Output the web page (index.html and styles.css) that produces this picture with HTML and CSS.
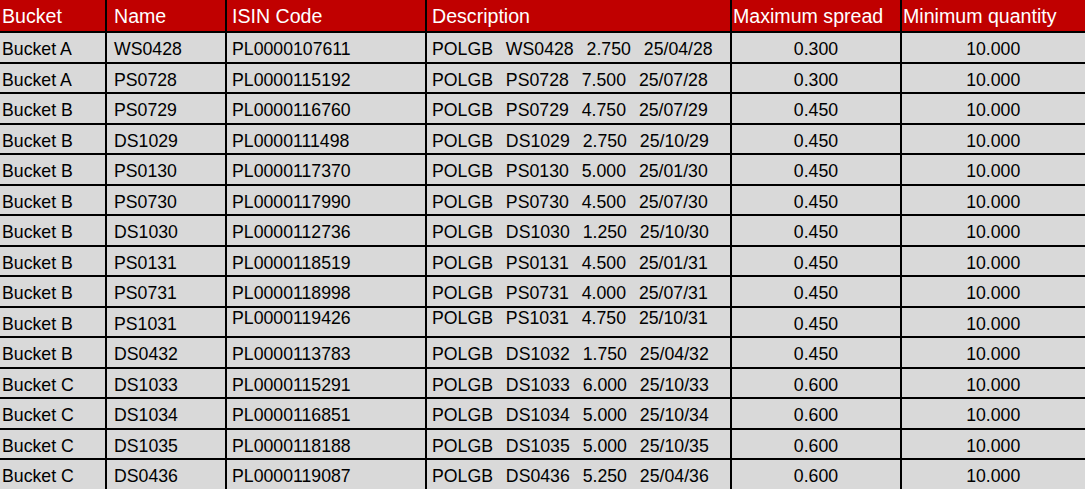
FILE: index.html
```html
<!DOCTYPE html>
<html>
<head>
<meta charset="utf-8">
<link rel="stylesheet" href="styles.css">
</head>
<body>
<table class="grid">
<colgroup>
<col class="c1"><col class="c2"><col class="c3"><col class="c4"><col class="c5"><col class="c6">
</colgroup>
<thead>
<tr class="head">
<th class="p1">Bucket</th><th class="p2">Name</th><th class="p3">ISIN Code</th><th class="p4 hd">Description</th><th class="p5">Maximum spread</th><th class="p6">Minimum quantity</th>
</tr>
</thead>
<tbody>
<tr><td class="p1">Bucket A</td><td class="p2">WS0428</td><td class="p3">PL0000107611</td><td class="p4">POLGB WS0428 2.750 25/04/28</td><td class="num">0.300</td><td class="num">10.000</td></tr>
<tr><td class="p1">Bucket A</td><td class="p2">PS0728</td><td class="p3">PL0000115192</td><td class="p4">POLGB PS0728 7.500 25/07/28</td><td class="num">0.300</td><td class="num">10.000</td></tr>
<tr><td class="p1">Bucket B</td><td class="p2">PS0729</td><td class="p3">PL0000116760</td><td class="p4">POLGB PS0729 4.750 25/07/29</td><td class="num">0.450</td><td class="num">10.000</td></tr>
<tr><td class="p1">Bucket B</td><td class="p2">DS1029</td><td class="p3">PL0000111498</td><td class="p4">POLGB DS1029 2.750 25/10/29</td><td class="num">0.450</td><td class="num">10.000</td></tr>
<tr><td class="p1">Bucket B</td><td class="p2">PS0130</td><td class="p3">PL0000117370</td><td class="p4">POLGB PS0130 5.000 25/01/30</td><td class="num">0.450</td><td class="num">10.000</td></tr>
<tr><td class="p1">Bucket B</td><td class="p2">PS0730</td><td class="p3">PL0000117990</td><td class="p4">POLGB PS0730 4.500 25/07/30</td><td class="num">0.450</td><td class="num">10.000</td></tr>
<tr><td class="p1">Bucket B</td><td class="p2">DS1030</td><td class="p3">PL0000112736</td><td class="p4">POLGB DS1030 1.250 25/10/30</td><td class="num">0.450</td><td class="num">10.000</td></tr>
<tr><td class="p1">Bucket B</td><td class="p2">PS0131</td><td class="p3">PL0000118519</td><td class="p4">POLGB PS0131 4.500 25/01/31</td><td class="num">0.450</td><td class="num">10.000</td></tr>
<tr><td class="p1">Bucket B</td><td class="p2">PS0731</td><td class="p3">PL0000118998</td><td class="p4">POLGB PS0731 4.000 25/07/31</td><td class="num">0.450</td><td class="num">10.000</td></tr>
<tr><td class="p1">Bucket B</td><td class="p2">PS1031</td><td class="p3 up">PL0000119426</td><td class="p4 up">POLGB PS1031 4.750 25/10/31</td><td class="num">0.450</td><td class="num">10.000</td></tr>
<tr><td class="p1">Bucket B</td><td class="p2">DS0432</td><td class="p3">PL0000113783</td><td class="p4">POLGB DS1032 1.750 25/04/32</td><td class="num">0.450</td><td class="num">10.000</td></tr>
<tr><td class="p1">Bucket C</td><td class="p2">DS1033</td><td class="p3">PL0000115291</td><td class="p4">POLGB DS1033 6.000 25/10/33</td><td class="num">0.600</td><td class="num">10.000</td></tr>
<tr><td class="p1">Bucket C</td><td class="p2">DS1034</td><td class="p3">PL0000116851</td><td class="p4">POLGB DS1034 5.000 25/10/34</td><td class="num">0.600</td><td class="num">10.000</td></tr>
<tr><td class="p1">Bucket C</td><td class="p2">DS1035</td><td class="p3">PL0000118188</td><td class="p4">POLGB DS1035 5.000 25/10/35</td><td class="num">0.600</td><td class="num">10.000</td></tr>
<tr><td class="p1">Bucket C</td><td class="p2">DS0436</td><td class="p3">PL0000119087</td><td class="p4">POLGB DS0436 5.250 25/04/36</td><td class="num">0.600</td><td class="num">10.000</td></tr>
</tbody>
</table>
</body>
</html>
```
FILE: styles.css
```css
html, body {
  margin: 0;
  padding: 0;
  background: #ffffff;
}
.grid {
  width: 1085px;
  border-collapse: collapse;
  table-layout: fixed;
  font-family: "Liberation Sans", Arial, sans-serif;
  color: #000000;
}
.c1 { width: 106px; }
.c2 { width: 120px; }
.c3 { width: 200px; }
.c4 { width: 305px; }
.c5 { width: 170px; }
.c6 { width: 184px; }
.grid th, .grid td {
  border: 2px solid #000000;
  padding: 0;
  white-space: nowrap;
  overflow: hidden;
  line-height: 20px;
}
.grid tr > :first-child { border-left: none; }
.grid tr > :last-child { border-right: 1px solid #000000; }
.grid thead th { border-top: none; }
.head th {
  background: #c00000;
  color: #ffffff;
  font-weight: normal;
  font-size: 19.6px;
  text-align: left;
  height: 30px;
  padding-top: 1px;
  vertical-align: middle;
}
.grid td {
  background: #d9d9d9;
  font-size: 17.7px;
  height: 24.5px;
  vertical-align: middle;
  padding-top: 4px;
}
.grid td.p4 { word-spacing: 8px; }
.grid td.up {
  vertical-align: top;
  padding-top: 0;
}
.p1 { padding-left: 2px !important; }
.p2 { padding-left: 7px !important; }
.p3 { padding-left: 5px !important; }
.p4 { padding-left: 5px !important; }
.p5 { padding-left: 1px !important; }
.p6 { padding-left: 1px !important; }
.num { text-align: center; }
```
